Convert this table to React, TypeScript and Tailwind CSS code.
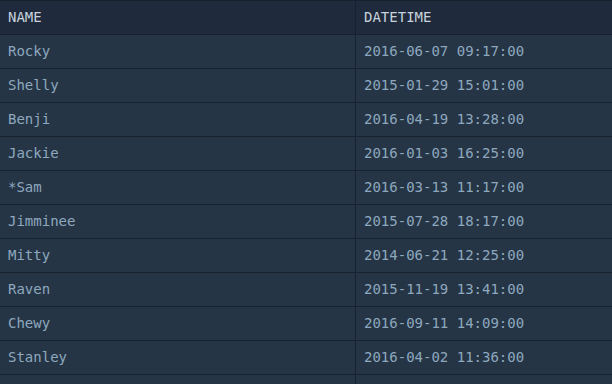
const rows: [string, string][] = [
  ["Rocky", "2016-06-07 09:17:00"],
  ["Shelly", "2015-01-29 15:01:00"],
  ["Benji", "2016-04-19 13:28:00"],
  ["Jackie", "2016-01-03 16:25:00"],
  ["*Sam", "2016-03-13 11:17:00"],
  ["Jimminee", "2015-07-28 18:17:00"],
  ["Mitty", "2014-06-21 12:25:00"],
  ["Raven", "2015-11-19 13:41:00"],
  ["Chewy", "2016-09-11 14:09:00"],
  ["Stanley", "2016-04-02 11:36:00"],
  ["", ""],
];

export default function App() {
  return (
    <div className="h-[384px] w-[612px] overflow-hidden border-t border-[#18212e] bg-[#253546] font-['DejaVu_Sans_Mono',monospace] text-[14px]">
      <div className="grid h-[34px] grid-cols-[356px_1fr] border-b border-[#18212e] bg-[#1f2a3c] text-[#c6d2dd]">
        <div className="flex items-center border-r border-[#18212e] px-2">NAME</div>
        <div className="flex items-center px-2">DATETIME</div>
      </div>
      {rows.map(([name, dt], i) => (
        <div
          key={i}
          className="grid h-[34px] grid-cols-[356px_1fr] border-b border-[#18212e] text-[#8ea8be]"
        >
          <div className="flex items-center border-r border-[#18212e] px-2">{name}</div>
          <div className="flex items-center px-2">{dt}</div>
        </div>
      ))}
    </div>
  );
}
